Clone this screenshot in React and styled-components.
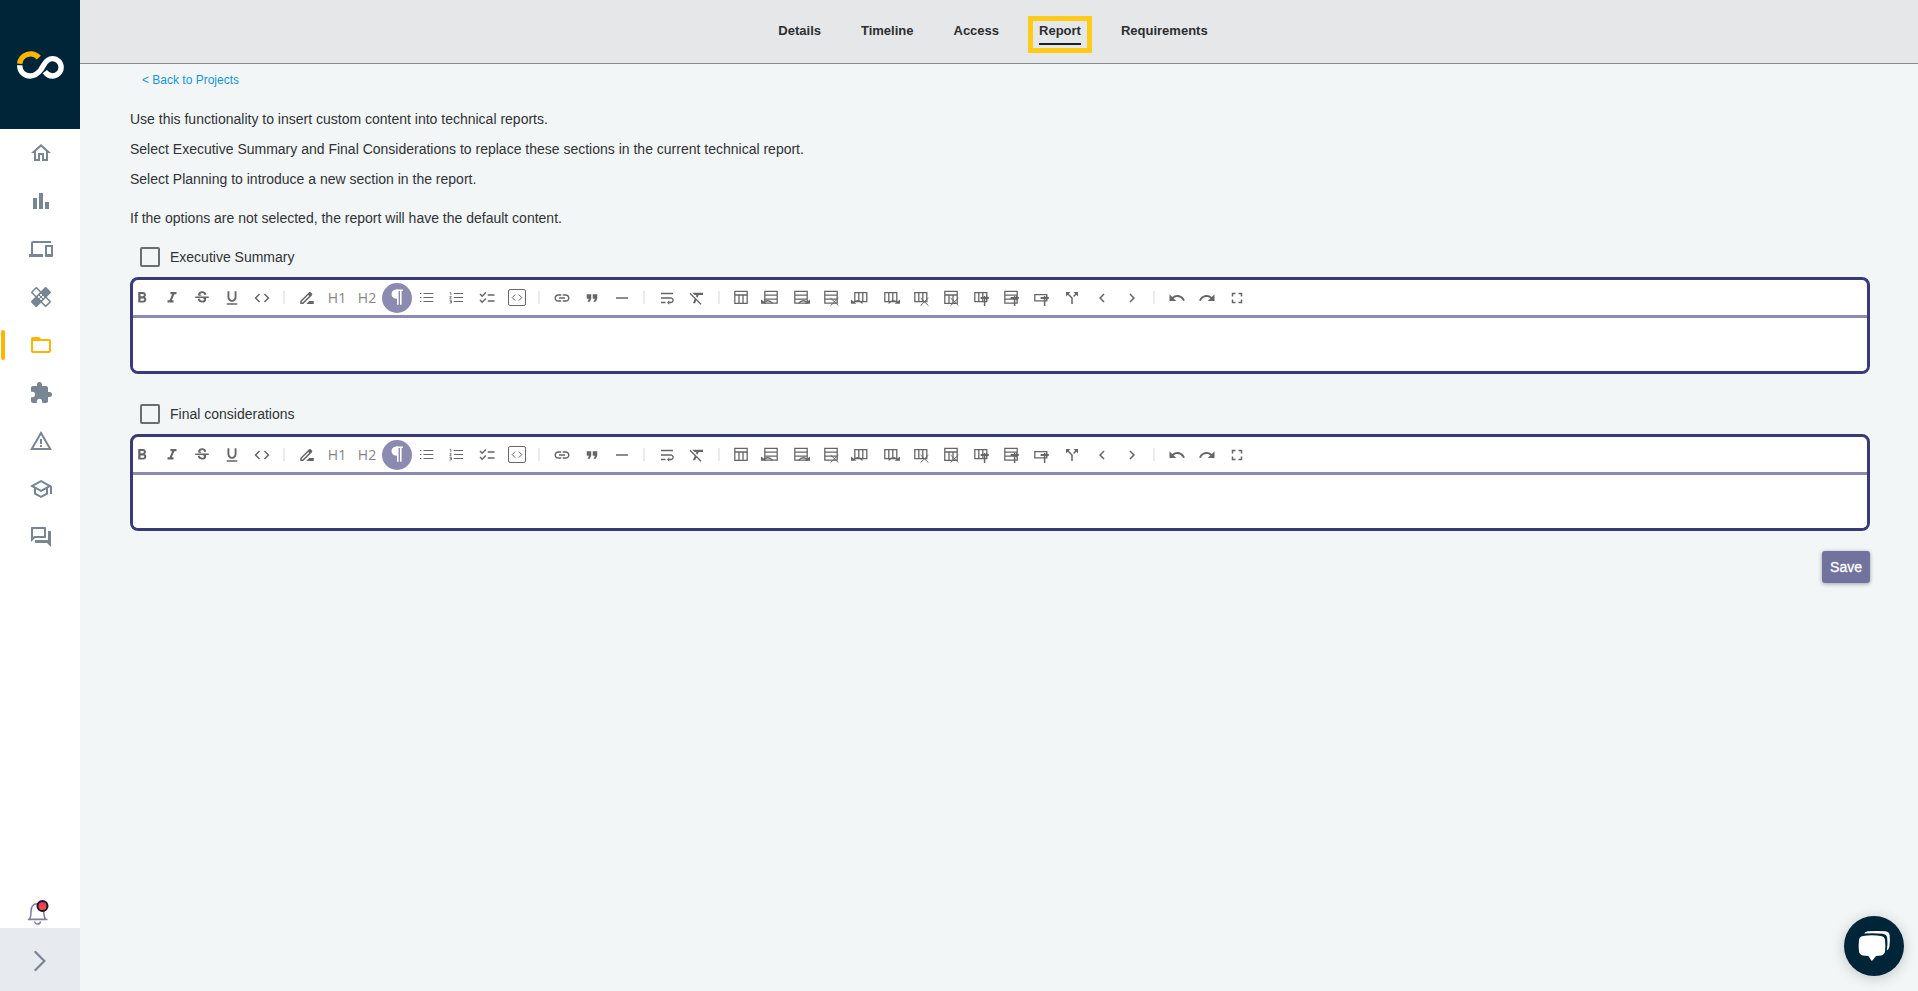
import React from "react";
import styled, { createGlobalStyle, css } from "styled-components";
import {
  MdOutlineHome, MdBarChart, MdDevices, MdHealing, MdFolderOpen, MdExtension, MdWarningAmber,
  MdOutlineSchool, MdOutlineQuestionAnswer, MdFormatBold, MdFormatItalic, MdStrikethroughS,
  MdFormatUnderlined, MdCode, MdDriveFileRenameOutline, MdChecklist, MdLink, MdFormatQuote,
  MdHorizontalRule, MdWrapText, MdFormatClear, MdCallSplit, MdChevronLeft, MdChevronRight,
  MdUndo, MdRedo, MdFullscreen,
} from "react-icons/md";

const color = {
  navy: "#002539",
  amber: "#ffb400",
  slate: "#788592",
  page: "#f2f6f7",
  indigo: "#393a77",
  lilac: "#8b8ab0",
  text: "#303235",
  tool: "#666666",
};

const GlobalStyle = createGlobalStyle`
  *, *::before, *::after { box-sizing: border-box; }
  body {
    margin: 0;
    background: ${color.page};
    color: ${color.text};
    font-family: "Liberation Sans", Arial, sans-serif;
    font-size: 14px;
    line-height: 20px;
  }
  button, input, textarea { font: inherit; }
`;

const Shell = styled.div`
  display: flex;
  min-height: 100vh;
`;

const Sidebar = styled.aside`
  position: sticky;
  top: 0;
  flex: none;
  display: flex;
  flex-direction: column;
  width: 80px;
  height: 100vh;
  background: #fff;
`;

const Brand = styled.a`
  flex: none;
  display: flex;
  align-items: center;
  justify-content: center;
  height: 129px;
  background: ${color.navy};
`;

const SideNav = styled.nav`
  display: flex;
  flex-direction: column;
  flex: 1;
`;

const SideLink = styled.a`
  position: relative;
  display: flex;
  align-items: center;
  justify-content: center;
  height: 48px;
  padding-left: 1px;
  font-size: 24px;
  color: ${(p) => (p.$active ? color.amber : color.slate)};
  ${(p) => p.$active && css`
    &::before {
      content: "";
      position: absolute;
      left: 1px;
      width: 4px;
      height: 30px;
      border-radius: 2px;
      background: ${color.amber};
    }
  `}
`;

const PlainButton = styled.button`
  display: flex;
  align-items: center;
  justify-content: center;
  padding: 0;
  border: 0;
  background: none;
  cursor: pointer;
`;

const BellButton = styled(PlainButton)`
  height: 30px;
  padding-right: 4px;
`;

const ExpandButton = styled(PlainButton)`
  height: 63px;
  padding-top: 3px;
  background: #e7eaef;
`;

const Main = styled.div`
  flex: 1;
  min-width: 0;
`;

const TopBar = styled.header`
  display: flex;
  justify-content: center;
  height: 64px;
  padding: 16px 12px 0 0;
  background: #e6e7e8;
  border-bottom: 1px solid #8a8b8d;
`;

const Tabs = styled.nav`
  display: flex;
  align-items: flex-start;
  gap: 40px;
`;

const Tab = styled.a`
  padding-top: 5px;
  font-size: 13px;
  font-weight: bold;
  color: #2b2e30;
  text-decoration: none;
`;

const TabFrame = styled.div`
  margin: 0 -11px;
  padding: 0 6px 3px;
  border: 5px solid #ffca18;
  ${Tab} {
    display: block;
    height: 24px;
    padding-top: 0;
    border-bottom: 2px solid #1d2122;
  }
`;

const Content = styled.main`
  padding: 6px 48px 40px 50px;
`;

const BackLink = styled.a`
  display: block;
  width: fit-content;
  margin: 0 0 19px 12px;
  font-size: 12px;
  color: #1296db;
  text-decoration: none;
`;

const Intro = styled.div`
  margin-bottom: 19px;
  p { margin: 0 0 10px; }
  p:last-child { margin: 19px 0 0; }
`;

const CheckLabel = styled.label`
  display: flex;
  align-items: center;
  gap: 10px;
  width: fit-content;
  margin: 0 0 10px 10px;
`;

const CheckBox = styled.input`
  appearance: none;
  width: 20px;
  height: 20px;
  margin: 0;
  border: 2px solid #6b6d6f;
  border-radius: 2px;
  &:checked { background: ${color.indigo}; }
`;

const Editor = styled.div`
  margin-bottom: 30px;
  border: 3px solid ${color.indigo};
  border-radius: 8px;
  background: #fff;
  overflow: hidden;
`;

const Toolbar = styled.div`
  display: flex;
  align-items: center;
  gap: 12px;
  height: 38px;
  border-bottom: 3px solid ${color.lilac};
`;

const Tool = styled(PlainButton)`
  flex: none;
  width: 18px;
  height: 18px;
  color: ${color.tool};
  font: 14px "Open Sans", "Noto Sans", sans-serif;
  svg { flex: none; width: 18px; height: 18px; overflow: visible; }
  ${(p) => p.$text && css`
    color: #868686;
  `}
  ${(p) => p.$active && css`
    width: 30px;
    height: 30px;
    margin: 0 -6px;
    border-radius: 50%;
    background: ${color.lilac};
    color: #fff;
  `}
`;

const Divider = styled.span`
  flex: none;
  width: 2px;
  height: 13px;
  margin-right: 1px;
  background: #ebebeb;
`;

const Field = styled.textarea`
  display: block;
  width: 100%;
  height: 53px;
  padding: 12px;
  border: 0;
  outline: 0;
  resize: none;
  background: #fff;
`;

const Actions = styled.div`
  display: flex;
  justify-content: flex-end;
  margin-top: -10px;
`;

const SaveButton = styled.button`
  height: 32px;
  padding: 0 8px;
  border: 0;
  border-radius: 3px;
  background: #72729f;
  color: #fff;
  -webkit-text-stroke: 0.3px #fff;
  box-shadow: 0 1px 4px rgba(0, 0, 0, 0.35);
  cursor: pointer;
`;

const ChatButton = styled(PlainButton)`
  position: fixed;
  right: 14px;
  bottom: 15px;
  width: 60px;
  height: 60px;
  border-radius: 50%;
  background: ${color.navy};
  box-shadow: 0 2px 14px rgba(0, 0, 0, 0.2);
`;

const Logo = () => (
  <svg width="48" height="30" viewBox="16 50 48 30" fill="none" strokeWidth="5.4" aria-hidden="true">
    <path d="M19.7 63.8A11 11 0 0 1 38.8 57.6" stroke={color.amber} />
    <path
      d="M19.7 65.2C19.7 72 24.5 76 30.2 76C35.5 76 38.4 73 41 69.5L43.8 64.8C46 61 48.6 58.6 52.4 58.6A8.7 8.7 0 0 1 52.4 76C49.5 76 47 74.6 44.8 71.6"
      stroke="#fff"
    />
  </svg>
);

const Bell = () => (
  <svg width="24" height="26" viewBox="0 0 24 26" fill="none" aria-hidden="true">
    <path d="M3.2 19.3C4.8 17.6 5 15.6 5 11.5C5 6.6 7.4 3.7 11.5 3.7C15.6 3.7 17.8 6.6 17.8 11.5C17.8 15.6 18.2 17.6 19.8 19.3ZM2 19.5H21.5" stroke="#7e7d99" strokeWidth="1.5" />
    <path d="M8.7 21.5C9.2 24.8 14 24.8 14.6 21.5" stroke="#7e7d99" strokeWidth="1.5" />
    <circle cx="16.5" cy="6" r="5" fill="url(#alert)" stroke="#161a28" strokeWidth="2" />
    <defs>
      <linearGradient id="alert" x1="0" y1="0" x2="0" y2="1">
        <stop offset="0" stopColor="#e8266f" />
        <stop offset="1" stopColor="#ff5b37" />
      </linearGradient>
    </defs>
  </svg>
);

const ChatBubbles = () => (
  <svg width="60" height="60" viewBox="0 0 60 60" fill="#fff" aria-hidden="true">
    <path d="M19 20Q28 18.6 37 20Q40.6 20.4 41 24Q41.7 30 41 35.5Q40.6 38.8 37 39.4L32 39.9Q30 42.6 27.8 45Q26 42.6 24.4 39.9L19 39.4Q15.4 38.8 15 35.5Q14.3 30 15 24Q15.4 20.4 19 20Z" />
    <path d="M20.2 17.6Q21 15.6 24 15.3Q33 14.6 41.5 15.3Q45.3 15.8 45.7 19.5Q46.2 25 45.4 30.5Q45 33.4 42.8 34.5Q44 28 43.2 22Q42.7 18.2 38.7 17.8Q29 16.8 20.2 17.6Z" />
  </svg>
);

const Glyph = ({ children, width = 1.3 }) => (
  <svg viewBox="0 0 18 18" fill="none" stroke="currentColor" strokeWidth={width} aria-hidden="true">
    {children}
  </svg>
);

const grid = {
  table: <path d="M1.8 2.4H14.2V14.4H1.8ZM1.8 6H14.2M6 6V14.4M10 6V14.4" />,
  rows: <path d="M1.8 2.4H14.2V14.2H1.8ZM1.8 6.2H14.2M1.8 10.2H14.2" />,
  cols: <path d="M1.8 3.6H13.8V12.6H1.8ZM5.8 3.6V12.6M9.8 3.6V12.6" />,
  cell: <path d="M1.8 5.6H13.8V11.8H1.8Z" />,
};

const mark = {
  before: <><path d="M-2 10.4V14.8H3.4Z" fill="currentColor" stroke="none" /><path d="M0.6 13.4Q5.4 9.6 9.6 14.4" /></>,
  after: <><path d="M17 10.4V14.8H11.6Z" fill="currentColor" stroke="none" /><path d="M14.4 13.4Q9.6 9.6 5.6 14.4" /></>,
  remove: <path d="M7.6 9L15.4 16.6M15.4 9L7.6 16.6" strokeWidth="1" />,
  header: (
    <>
      <path d="M7.6 9H15.8" strokeWidth="2" />
      <path d="M11.6 7V17" strokeWidth="1.5" />
      <path d="M13.6 6.6V11.4" strokeWidth="1" />
    </>
  ),
};

const GridGlyph = ({ base, action }) => <Glyph>{grid[base]}{action && mark[action]}</Glyph>;

const tools = [
  ["Bold", <MdFormatBold />],
  ["Italic", <MdFormatItalic />],
  ["Strikethrough", <MdStrikethroughS />],
  ["Underline", <MdFormatUnderlined />],
  ["Code", <MdCode />],
  null,
  ["Highlight", <MdDriveFileRenameOutline />],
  ["Heading 1", "H1"],
  ["Heading 2", "H2"],
  ["Paragraph", (
    <Glyph>
      <path d="M10 0.6C6 0.6 3.6 2 3.6 5.2C3.6 8.4 6 9.8 10 9.8Z" fill="currentColor" stroke="none" />
      <path d="M8 1.2H15M9.8 1V15.8M12.8 1V15.8" strokeWidth="1.6" />
    </Glyph>
  )],
  ["Bullet list", (
    <Glyph width={1}>
      <path d="M2 4.5H3.4M2 8.5H3.4M2 12.5H3.4M5.4 4.5H15.4M5.4 8.5H15.4M5.4 12.5H15.4" />
    </Glyph>
  )],
  ["Ordered list", (
    <Glyph width={1}>
      <path d="M5.8 4.5H15M5.8 8.5H15M5.8 12.5H15" />
      <path d="M1.6 3.4H2.9V6.2M1.5 7.6H3.4L1.8 9.8H3.6M1.5 11.4H3.4V14H1.5M2 12.7H3.4" strokeWidth="0.8" />
    </Glyph>
  )],
  ["Task list", <MdChecklist />],
  ["Code block", (
    <Glyph width={1}>
      <rect x="0.5" y="0.5" width="17" height="16" rx="1.6" />
      <path d="M7.2 5.6L4.2 8.6L7.2 11.6M10.8 5.6L13.8 8.6L10.8 11.6" />
    </Glyph>
  )],
  null,
  ["Link", <MdLink />],
  ["Quote", <MdFormatQuote />],
  ["Horizontal rule", <MdHorizontalRule />],
  null,
  ["Hard break", <MdWrapText />],
  ["Clear format", <MdFormatClear />],
  null,
  ["Insert table", <GridGlyph base="table" />],
  ["Add row before", <GridGlyph base="rows" action="before" />],
  ["Add row after", <GridGlyph base="rows" action="after" />],
  ["Delete row", <GridGlyph base="rows" action="remove" />],
  ["Add column before", <GridGlyph base="cols" action="before" />],
  ["Add column after", <GridGlyph base="cols" action="after" />],
  ["Delete column", <GridGlyph base="cols" action="remove" />],
  ["Delete table", <GridGlyph base="table" action="remove" />],
  ["Toggle header column", <GridGlyph base="cols" action="header" />],
  ["Toggle header row", <GridGlyph base="rows" action="header" />],
  ["Toggle header cell", <GridGlyph base="cell" action="header" />],
  ["Merge or split", <MdCallSplit />],
  ["Previous cell", <MdChevronLeft />],
  ["Next cell", <MdChevronRight />],
  null,
  ["Undo", <MdUndo />],
  ["Redo", <MdRedo />],
  ["Fullscreen", <MdFullscreen />],
];

const sideLinks = [
  ["Home", MdOutlineHome],
  ["Dashboard", MdBarChart],
  ["Assets", MdDevices],
  ["Remediation", MdHealing],
  ["Projects", MdFolderOpen],
  ["Integrations", MdExtension],
  ["Alerts", MdWarningAmber],
  ["Academy", MdOutlineSchool],
  ["Messages", MdOutlineQuestionAnswer],
];

function ReportSection({ id, title }) {
  return (
    <section>
      <CheckLabel htmlFor={id}>
        <CheckBox type="checkbox" id={id} />
        {title}
      </CheckLabel>
      <Editor>
        <Toolbar role="toolbar" aria-label={`${title} formatting`}>
          {tools.map((tool, i) =>
            tool ? (
              <Tool
                key={tool[0]}
                type="button"
                aria-label={tool[0]}
                $active={tool[0] === "Paragraph"}
                $text={typeof tool[1] === "string"}
              >
                {tool[1]}
              </Tool>
            ) : (
              <Divider key={i} />
            )
          )}
        </Toolbar>
        <Field aria-label={`${title} content`} />
      </Editor>
    </section>
  );
}

export default function App() {
  return (
    <>
      <GlobalStyle />
      <Shell>
        <Sidebar>
          <Brand href="#" aria-label="Dashboard home"><Logo /></Brand>
          <SideNav aria-label="Main">
            {sideLinks.map(([name, Icon]) => (
              <SideLink key={name} href="#" aria-label={name} $active={name === "Projects"}>
                <Icon />
              </SideLink>
            ))}
          </SideNav>
          <BellButton type="button" aria-label="Notifications"><Bell /></BellButton>
          <ExpandButton type="button" aria-label="Expand menu">
            <svg width="14" height="22" viewBox="0 0 14 22" fill="none" stroke={color.slate} strokeWidth="2.2" strokeLinecap="round">
              <path d="M2.4 2L11.4 11L2.4 20" />
            </svg>
          </ExpandButton>
        </Sidebar>
        <Main>
          <TopBar>
            <Tabs aria-label="Project">
              <Tab href="#">Details</Tab>
              <Tab href="#">Timeline</Tab>
              <Tab href="#">Access</Tab>
              <TabFrame><Tab href="#" aria-current="page">Report</Tab></TabFrame>
              <Tab href="#">Requirements</Tab>
            </Tabs>
          </TopBar>
          <Content>
            <BackLink href="#">&lt; Back to Projects</BackLink>
            <Intro>
              <p>Use this functionality to insert custom content into technical reports.</p>
              <p>Select Executive Summary and Final Considerations to replace these sections in the current technical report.</p>
              <p>Select Planning to introduce a new section in the report.</p>
              <p>If the options are not selected, the report will have the default content.</p>
            </Intro>
            <ReportSection id="executive-summary" title="Executive Summary" />
            <ReportSection id="final-considerations" title="Final considerations" />
            <Actions><SaveButton type="button">Save</SaveButton></Actions>
          </Content>
        </Main>
      </Shell>
      <ChatButton type="button" aria-label="Open chat"><ChatBubbles /></ChatButton>
    </>
  );
}
